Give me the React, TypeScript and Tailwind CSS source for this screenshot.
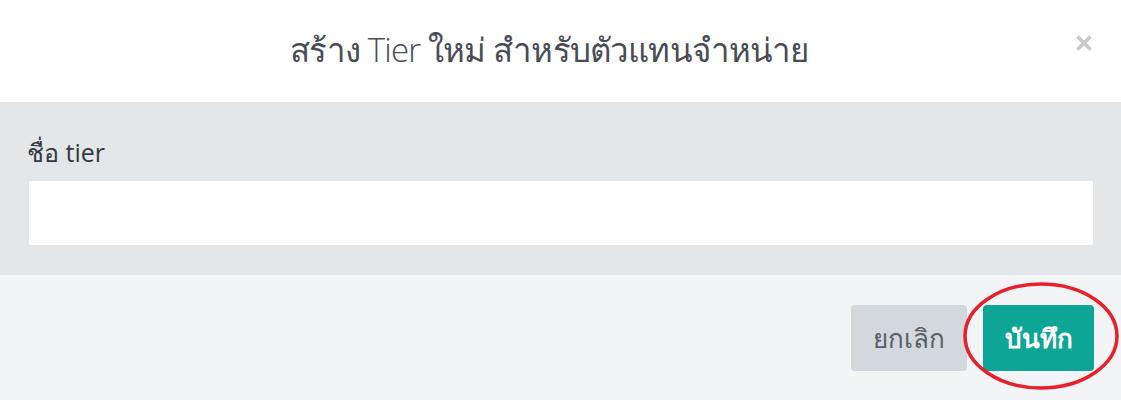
export default function App() {
  return (
    <div className="w-[1121px] h-[400px] overflow-hidden bg-white font-['Open_Sans','Noto_Sans','DejaVu_Sans',sans-serif] flex flex-col">
      {/* Header */}
      <div className="h-[102px] shrink-0 relative flex items-center justify-center bg-white rounded-tr-[6px] pr-[22px]">
        <h1 className="text-[33px] text-[#474c55] tracking-tight pb-[2px]">
          สร้าง <span className="font-light">Tier</span> ใหม่ สำหรับตัวแทนจำหน่าย
        </h1>
        <button className="absolute right-[28px] top-[34px] text-[#c9c9c9]">
          <svg width="18" height="18" viewBox="0 0 18 18">
            <path d="M2.5 2.5 L15.5 15.5 M15.5 2.5 L2.5 15.5" stroke="currentColor" strokeWidth="3.6" strokeLinecap="butt" />
          </svg>
        </button>
      </div>

      {/* Body */}
      <div className="h-[173px] shrink-0 bg-[#e4e7ea] pl-[29px] pr-[28px] pt-[34px]">
        <label className="block text-[25px] leading-[32px] text-[#34383e] -ml-[2px]">ชื่อ tier</label>
        <input type="text" className="mt-[13px] w-full h-[64px] bg-white rounded-[2px] outline-none" />
      </div>

      {/* Footer */}
      <div className="flex-1 relative bg-[#f3f4f6] flex justify-end items-start gap-[16px] pt-[30px] pr-[27px]">
        <button className="w-[116px] h-[66px] rounded-[4px] bg-[#d2d8dd] text-[#5b5e63] text-[26px]">ยกเลิก</button>
        <button className="w-[111px] h-[66px] rounded-[4px] bg-[#0ca596] text-white text-[26px] font-semibold">บันทึก</button>
        <svg className="absolute left-[962px] top-[5px]" width="158" height="112" viewBox="0 0 158 112">
          <ellipse cx="79" cy="56" rx="76" ry="52" fill="none" stroke="#e8202a" strokeWidth="3.5" />
        </svg>
      </div>
    </div>
  );
}
